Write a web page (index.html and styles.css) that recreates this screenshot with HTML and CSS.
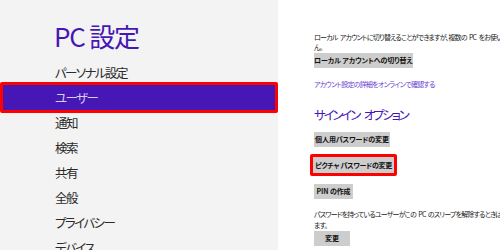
FILE: index.html
```html
<!DOCTYPE html>
<html lang="ja">
<head>
<meta charset="utf-8">
<link rel="stylesheet" href="styles.css">
</head>
<body>
<div class="app">
  <aside class="side">
    <h1 class="title">PC 設定</h1>
    <ul class="nav">
      <li class="nav-item">パーソナル設定</li>
      <li class="nav-item active">ユーザー</li>
      <li class="nav-item">通知</li>
      <li class="nav-item">検索</li>
      <li class="nav-item">共有</li>
      <li class="nav-item">全般</li>
      <li class="nav-item">プライバシー</li>
      <li class="nav-item">デバイス</li>
    </ul>
  </aside>
  <main class="main">
    <p class="text">ローカル アカウントに切り替えることができますが、複数の PC をお使いの場合は設定が同期されませ<br>ん。</p>
    <div class="btn b0">ローカル アカウントへの切り替え</div>
    <a class="link">アカウント設定の詳細をオンラインで確認する</a>
    <h2 class="section">サインイン オプション</h2>
    <div class="btn b1">個人用パスワードの変更</div>
    <div class="hl"><div class="btn b2">ピクチャ パスワードの変更</div></div>
    <div class="btn b3">PIN の作成</div>
    <p class="text t2">パスワードを持っているユーザーがこの PC のスリープを解除するときは、パスワードの入力を求め<br>ます。</p>
    <div class="btn b4">変更</div>
  </main>
</div>
</body>
</html>
```
FILE: styles.css
```css
* { box-sizing: border-box; }
html, body { margin: 0; padding: 0; overflow: hidden; }
body { width: 500px; height: 250px; font-family: "Noto Sans CJK JP", "Noto Sans", sans-serif; font-feature-settings: "palt" 1; background: #fff; }
.app { display: flex; height: 250px; overflow: hidden; }
.side { width: 278px; flex: none; background: #f3f3f3; padding-top: 18px; }
.title { margin: 0 0 0 54px; font-size: 26px; font-weight: 400; color: #4617b4; line-height: 36px; letter-spacing: -1.2px; }
.nav { list-style: none; margin: 6px 0 0 0; padding: 0; }
.nav-item { height: 25px; line-height: 25px; font-size: 12.5px; color: #2a2a2a; padding-left: 55px; white-space: nowrap; letter-spacing: -1.6px; }
.nav-item.active { height: 31px; margin: -3px 0; border: 3px solid #f00; border-radius: 2px; background: #4617b4; color: #d6ccf4; padding-left: 52px; line-height: 25px; }
.main { flex: 1; min-width: 0; overflow: hidden; padding: 32px 0 0 36px; white-space: nowrap; }
.text { margin: 0; font-size: 7px; line-height: 10px; color: #222; letter-spacing: -0.8px; word-spacing: 1.5px; }
.btn { display: table; background: #cdcdcd; font-size: 7px; font-weight: 700; color: #111; padding: 0; height: 15px; line-height: 15px; text-align: center; letter-spacing: -0.1px; }
.b0 { margin-top: 1px; width: 98px; }
.link { display: block; margin-top: 10px; font-size: 7px; color: #6a3fd0; line-height: 12px; letter-spacing: -0.75px; }
.section { margin: 14px 0 0 0; font-size: 12.5px; font-weight: 400; color: #4617b4; line-height: 22px; letter-spacing: -2.2px; word-spacing: 4px; }
.b1 { margin-top: 6px; width: 76px; }
.hl { display: table; margin: 7px 0 0 -4px; border: 3px solid #f00; border-radius: 2px; }
.b2 { width: 81px; height: 16px; line-height: 16px; letter-spacing: -0.3px; }
.b3 { margin-top: 8px; width: 39px; }
.t2 { margin-top: 9.5px; line-height: 11px; }
.b4 { margin-top: 0.5px; width: 36px; }
```
